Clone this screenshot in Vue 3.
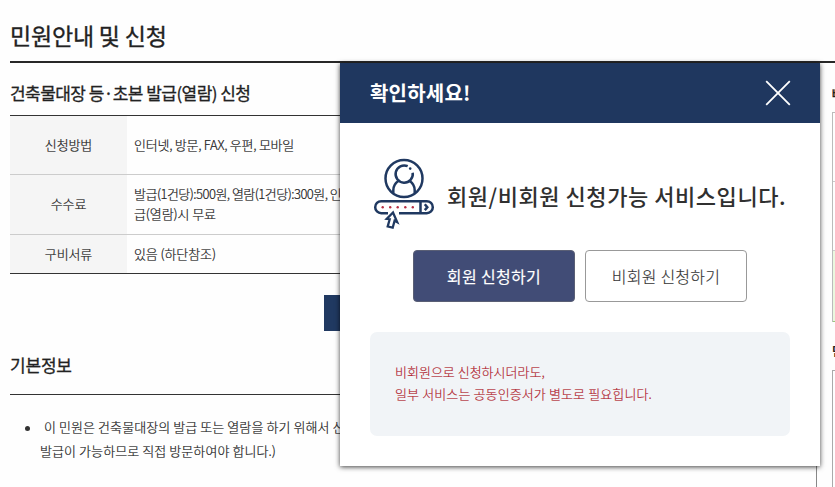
<script setup>
const rows = [
  { label: '신청방법', lines: [{ text: '인터넷, 방문, FAX, 우편, 모바일', fit: 'snug' }] },
  { label: '수수료', lines: [{ text: '발급(1건당):500원, 열람(1건당):300원, 인터넷발', fit: 'tight' }, { text: '급(열람)시 무료', fit: '' }] },
  { label: '구비서류', lines: [{ text: '있음 (하단참조)', fit: '' }] },
]
</script>

<template>
  <div class="page">
    <h1><span>민원안내 및 신청</span></h1>
    <div class="columns">
      <main>
        <h2 class="service">건축물대장 등·초본 발급(열람) 신청</h2>
        <div class="table">
          <div v-for="row in rows" :key="row.label" class="row">
            <div class="label"><span>{{ row.label }}</span></div>
            <div class="value"><p v-for="line in row.lines" :key="line.text" :class="line.fit">{{ line.text }}</p></div>
          </div>
        </div>
        <div class="actions"><button class="apply"></button></div>
        <h2 class="basic"><span>기본정보</span></h2>
        <section class="info">
          <i class="bullet"></i>
          <div class="info-text">
            <p class="first">이 민원은 건축물대장의 발급 또는 열람을 하기 위해서 신청하는</p>
            <p class="second">발급이 가능하므로 직접 방문하여야 합니다.)</p>
          </div>
        </section>
      </main>
      <aside>
        <b class="side-title">빠른</b>
        <div class="side-box"><div></div><div></div><div class="green"></div></div>
        <b class="side-title lower">민원</b>
        <div class="side-panel"></div>
      </aside>
    </div>

    <div class="modal">
      <header>
        <strong>확인하세요!</strong>
        <svg width="26" height="26" viewBox="0 0 26 26"><path d="M1.2 1.2 24.8 24.8M24.8 1.2 1.2 24.8" stroke="#fff" stroke-width="1.8" /></svg>
      </header>
      <div class="notice">
        <svg class="icon" width="62" height="72" viewBox="0 0 62 72" fill="none" stroke="#203961" stroke-width="2.5">
          <circle cx="31" cy="20.5" r="18.5" />
          <path d="M34.7 8.2a8.6 8.6 0 1 0 5 6.6" />
          <circle cx="37.2" cy="10.6" r="1.3" fill="#203961" stroke="none" />
          <path d="M20.3 35v-2.7c0-4.5 2-7.4 5.3-9.6M41.7 35v-2.7c0-4.5-2-7.4-5.3-9.6" />
          <path d="M15 55.2H8.2a6 6 0 0 1 0-12h45.6a6 6 0 0 1 0 12H26" />
          <path d="M47.5 43v12.5M51.8 46.3l2.5 2.9-2.5 2.9" />
          <g fill="#b62e42" stroke="none">
            <circle cx="9.7" cy="49.3" r="1.2" /><circle cx="17.2" cy="49.3" r="1.2" /><circle cx="24.7" cy="49.3" r="1.2" /><circle cx="32.3" cy="49.3" r="1.2" /><circle cx="39.8" cy="49.3" r="1.2" />
          </g>
          <path d="m20 54.5-6.3 6.4 3 .3-2 7.3 5 1.2 1.9-7 2.6 1.4Z" fill="#fff" stroke-width="2.3" />
        </svg>
        <h3>회원/비회원 신청가능 서비스입니다.</h3>
      </div>
      <div class="buttons">
        <button class="primary"><span>회원 신청하기</span></button>
        <button class="secondary"><span>비회원 신청하기</span></button>
      </div>
      <div class="warning">
        <p class="w1">비회원으로 신청하시더라도,</p>
        <p class="w2">일부 서비스는 공동인증서가 별도로 필요힙니다.</p>
      </div>
    </div>
  </div>
</template>

<style>
body { overflow: hidden; background: #fefefe; }
</style>

<style scoped>
* { box-sizing: border-box; }
.page { position: relative; width: 835px; height: 487px; overflow: hidden; padding-left: 10px; color: #222; font-family: "Noto Sans CJK KR", sans-serif; white-space: nowrap; }
h1, h2, h3, p { margin: 0; }
h1 { height: 63px; padding-top: 18px; border-bottom: 2px solid #282828; font-size: 23px; line-height: 34px; font-weight: 400; letter-spacing: -0.2px; -webkit-text-stroke: .35px #222; }
.columns { display: flex; justify-content: space-between; height: 424px; }
main { width: 807px; }
.service { height: 52px; padding-top: 16px; font-size: 17px; line-height: 28px; font-weight: 400; letter-spacing: -0.55px; -webkit-text-stroke: .3px #222; }
.table { border-top: 1px solid #333; border-bottom: 1px solid #333; font-size: 13px; line-height: 20px; letter-spacing: -0.1px; font-weight: 300; }
.row { display: grid; grid-template-columns: 117px 1fr; height: 60px; border-bottom: 1px solid #ccc; }
.row:first-child { height: 59px; }
.row:last-child { height: 38px; border-bottom: 0; }
.label { display: flex; align-items: center; justify-content: center; padding-bottom: 1px; background: #f5f5f5; }
.value { display: flex; flex-direction: column; justify-content: center; padding: 0 0 1px 7px; }
.snug { letter-spacing: -0.25px; }
.tight { letter-spacing: -0.52px; }
.label, .value, .info { -webkit-text-stroke: .2px #222; }
.actions { padding: 21px 0 0 314px; height: 70px; }
.apply { display: block; width: 180px; height: 36px; border: 0; background: #203961; }
.basic { height: 51px; padding-top: 7px; border-bottom: 1px solid #333; font-size: 17px; line-height: 28px; font-weight: 400; letter-spacing: -0.2px; -webkit-text-stroke: .3px #222; }
.info { display: flex; height: 93px; padding: 20px 0 0 15px; border-right: 1px solid #888; font-size: 13px; line-height: 24px; font-weight: 300; letter-spacing: .08px; }
.bullet { width: 5px; height: 5px; margin-top: 11px; border-radius: 50%; background: #333; }
.info-text { padding-left: 10px; }
.first { padding-left: 4px; }
aside { width: 3px; overflow: hidden; }
.side-title { display: block; height: 49px; padding-top: 22px; font-size: 12px; line-height: 18px; }
.side-box { height: 210px; border-left: 1px solid #bbb; border-top: 1px solid #bbb; }
.side-box div { height: 69px; border-bottom: 1px solid #ccc; }
.side-box .green { height: 71px; border-color: #9bc980; background: #eaf8df; }
.lower { height: 48px; padding-top: 20px; }
.side-panel { height: 120px; border-left: 1px solid #aaa; border-top: 1px solid #aaa; }
.modal { position: absolute; left: 340px; top: 63px; width: 480px; height: 403px; background: #fff; box-shadow: 0 1px 5px rgba(0, 0, 0, .75); }
header { display: flex; justify-content: space-between; align-items: center; height: 60px; padding: 0 29px 0 30px; background: #1f375f; color: #fff; }
header strong { font-size: 20px; line-height: 28px; letter-spacing: .2px; }
.notice { display: flex; padding: 35px 0 0 33px; height: 127px; }
.icon { flex: none; }
h3 { padding: 20px 0 0 12px; color: #303030; font-size: 22px; line-height: 34px; font-weight: 500; letter-spacing: .55px; }
.buttons { display: flex; gap: 10px; padding-left: 73px; }
.buttons button { width: 162px; height: 52px; padding: 0 0 1px; border: 1px solid #999; border-radius: 4px; background: #fff; color: #333; font: 300 16px/24px "Noto Sans CJK KR", sans-serif; letter-spacing: .25px; }
.secondary { -webkit-text-stroke: .15px #333; }
.buttons .primary { border-color: #5a5f75; background: #414c76; color: #fff; font-weight: 400; letter-spacing: .35px; -webkit-text-stroke: .15px #fff; }
.warning { width: 420px; height: 104px; margin: 30px 0 0 30px; padding: 29px 25px; border-radius: 7px; background: #f1f4f7; color: #b01c2c; font-size: 13px; line-height: 22px; font-weight: 300; -webkit-text-stroke: .15px #b01c2c; }
.w2 { letter-spacing: .12px; }
</style>
